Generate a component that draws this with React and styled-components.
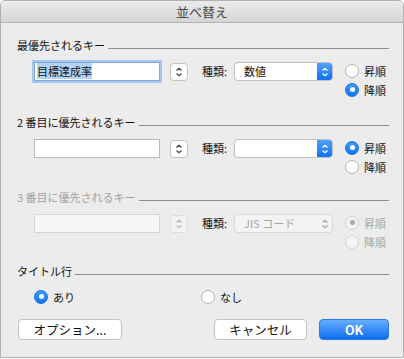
import React from "react";
import styled, { createGlobalStyle, css } from "styled-components";

const GlobalStyle = createGlobalStyle`
  html, body {
    margin: 0;
    padding: 0;
    background: #ffffff;
  }
  body {
    font-family: "Noto Sans CJK JP", "Noto Sans", sans-serif;
    -webkit-font-smoothing: antialiased;
  }
`;

const Window = styled.div`
  box-sizing: border-box;
  width: 404px;
  height: 358px;
  background: #ececec;
  border: 1px solid #b1b1b1;
  border-radius: 5px 5px 0 0;
  display: flex;
  flex-direction: column;
  overflow: hidden;
`;

const TitleBar = styled.div`
  height: 21px;
  flex-shrink: 0;
  display: flex;
  align-items: center;
  justify-content: center;
  background: linear-gradient(#ebebeb, #d5d5d5);
  border-bottom: 1px solid #b2b2b2;
  font-size: 13px;
  color: #4a4a4a;
`;

const Body = styled.div`
  padding: 14px 14px 0 16px;
  display: flex;
  flex-direction: column;
`;

const Section = styled.div`
  display: flex;
  flex-direction: column;
  height: ${(p) => p.h}px;
`;

const Header = styled.div`
  display: flex;
  align-items: center;
  height: 16px;
  font-size: 11px;
  white-space: nowrap;
  color: ${(p) => (p.disabled ? "#a3a3a3" : "#111")};
`;

const Rule = styled.div`
  flex: 1;
  height: 1px;
  margin: 7px 0 0 3px;
  background: #8e8e8e;
`;

const KeyRow = styled.div`
  display: flex;
  align-items: flex-start;
  margin-top: 8px;
  padding-left: 17px;
`;

const Field = styled.div`
  box-sizing: border-box;
  flex-shrink: 0;
  width: 126px;
  height: 19px;
  margin-top: 1px;
  background: ${(p) => (p.disabled ? "#f6f6f6" : "#ffffff")};
  border: 1px solid ${(p) => (p.disabled ? "#d6d6d6" : "#b9b9b9")};
  font-size: 11px;
  line-height: 17px;
  padding-left: 2px;
  white-space: nowrap;
  ${(p) =>
    p.focused &&
    css`
      border-color: #7fa9dc;
      box-shadow: 0 0 0 2px #a6c8ef;
    `}
`;

const Selected = styled.span`
  background: #b3d3fb;
  color: #111;
`;

const Stepper = styled.div`
  box-sizing: border-box;
  flex-shrink: 0;
  width: 18px;
  height: 18px;
  margin: 2px 0 0 10px;
  border: 1px solid ${(p) => (p.disabled ? "#dcdcdc" : "#c2c2c2")};
  border-radius: 4px;
  background: ${(p) => (p.disabled ? "#f3f3f3" : "#ffffff")};
  display: flex;
  align-items: center;
  justify-content: center;
`;

const KindLabel = styled.div`
  flex-shrink: 0;
  margin: 1px 0 0 14px;
  width: 32px;
  font-size: 11px;
  line-height: 19px;
  white-space: nowrap;
  color: #111;
`;

const Popup = styled.div`
  box-sizing: border-box;
  flex-shrink: 0;
  width: 99px;
  height: 19px;
  margin-top: 1px;
  border: 1px solid ${(p) => (p.disabled ? "#d8d8d8" : "#c0c0c0")};
  border-radius: 4px;
  background: ${(p) => (p.disabled ? "#f3f3f3" : "#ffffff")};
  display: flex;
  overflow: hidden;
`;

const PopupText = styled.div`
  flex: 1;
  padding-left: 9px;
  font-size: 11px;
  line-height: 17px;
  white-space: nowrap;
  color: ${(p) => (p.disabled ? "#a5a5a5" : "#111")};
`;

const PopupArrow = styled.div`
  width: 15px;
  display: flex;
  align-items: center;
  justify-content: center;
  background: ${(p) =>
    p.disabled ? "transparent" : "linear-gradient(#4ea3fb, #1170f2)"};
`;

const RadioCol = styled.div`
  display: flex;
  flex-direction: column;
  flex-shrink: 0;
  margin-left: 12px;
`;

const RadioItem = styled.label`
  display: flex;
  align-items: center;
  flex-shrink: 0;
  height: 19px;
  gap: 5px;
  font-size: 11px;
  white-space: nowrap;
  color: ${(p) => (p.disabled ? "#a8a8a8" : "#111")};
  width: ${(p) => (p.w ? `${p.w}px` : "auto")};
`;

const Circle = styled.span`
  box-sizing: border-box;
  flex-shrink: 0;
  width: 14px;
  height: 14px;
  border-radius: 50%;
  display: flex;
  align-items: center;
  justify-content: center;
  ${(p) =>
    p.checked && !p.disabled
      ? css`
          background: linear-gradient(#3d9cfc, #0f74f3);
          border: 1px solid #1a6fe0;
        `
      : css`
          background: ${p.disabled ? "#f4f4f4" : "#ffffff"};
          border: 1px solid ${p.disabled ? "#d3d3d3" : "#b2b2b2"};
        `}
  &::after {
    content: "";
    display: ${(p) => (p.checked ? "block" : "none")};
    width: 5px;
    height: 5px;
    border-radius: 50%;
    background: ${(p) => (p.disabled ? "#a9a9a9" : "#ffffff")};
  }
`;

const TitleRow = styled.div`
  display: flex;
  margin-top: 8px;
  padding-left: 17px;
`;

const ButtonRow = styled.div`
  display: flex;
  align-items: center;
  margin-top: 14px;
  padding-left: 1px;
`;

const Button = styled.button`
  box-sizing: border-box;
  flex-shrink: 0;
  height: 21px;
  width: ${(p) => p.w}px;
  padding: 0;
  margin-left: ${(p) => p.ml || 0}px;
  border-radius: 4px;
  font-family: inherit;
  font-size: 12.5px;
  line-height: 19px;
  white-space: nowrap;
  ${(p) =>
    p.primary
      ? css`
          background: linear-gradient(#66affa, #0c6cf1);
          border: 1px solid #2a7ae8;
          color: #ffffff;
          font-weight: 600;
        `
      : css`
          background: #ffffff;
          border: 1px solid #c3c3c3;
          color: #111;
        `}
`;

const Chevrons = ({ color = "#333", size = 10 }) => (
  <svg width={size * 0.8} height={size} viewBox="0 0 8 10">
    <path d="M1.5 3.5 L4 1.2 L6.5 3.5" fill="none" stroke={color} strokeWidth="1.2" />
    <path d="M1.5 6.5 L4 8.8 L6.5 6.5" fill="none" stroke={color} strokeWidth="1.2" />
  </svg>
);

const Radio = ({ checked, disabled, children, w }) => (
  <RadioItem disabled={disabled} w={w}>
    <Circle checked={checked} disabled={disabled} />
    {children}
  </RadioItem>
);

const KeySection = ({ title, value, kind, asc, disabled, focused, h }) => (
  <Section h={h}>
    <Header disabled={disabled}>
      {title}
      <Rule />
    </Header>
    <KeyRow>
      <Field disabled={disabled} focused={focused}>
        {focused ? <Selected>{value}</Selected> : value}
      </Field>
      <Stepper disabled={disabled}>
        <Chevrons color={disabled ? "#b5b5b5" : "#444"} />
      </Stepper>
      <KindLabel>種類:</KindLabel>
      <Popup disabled={disabled}>
        <PopupText disabled={disabled}>{kind}</PopupText>
        <PopupArrow disabled={disabled}>
          <Chevrons color={disabled ? "#a8a8a8" : "#ffffff"} />
        </PopupArrow>
      </Popup>
      <RadioCol>
        <Radio checked={asc} disabled={disabled}>昇順</Radio>
        <Radio checked={!asc} disabled={disabled}>降順</Radio>
      </RadioCol>
    </KeyRow>
  </Section>
);

export default function App() {
  return (
    <>
      <GlobalStyle />
      <Window>
        <TitleBar>並べ替え</TitleBar>
        <Body>
          <KeySection h={77} title="最優先されるキー" value="目標達成率" kind="数値" asc={false} focused />
          <KeySection h={75} title="2 番目に優先されるキー" value="" kind="" asc />
          <KeySection h={74} title="3 番目に優先されるキー" value="" kind="JIS コード" asc disabled />
          <Section h={42}>
            <Header>
              タイトル行
              <Rule />
            </Header>
            <TitleRow>
              <Radio checked w={167}>あり</Radio>
              <Radio>なし</Radio>
            </TitleRow>
          </Section>
          <ButtonRow>
            <Button w={104}>オプション...</Button>
            <Button w={93} ml={92}>キャンセル</Button>
            <Button w={70} ml={12} primary>OK</Button>
          </ButtonRow>
        </Body>
      </Window>
    </>
  );
}
